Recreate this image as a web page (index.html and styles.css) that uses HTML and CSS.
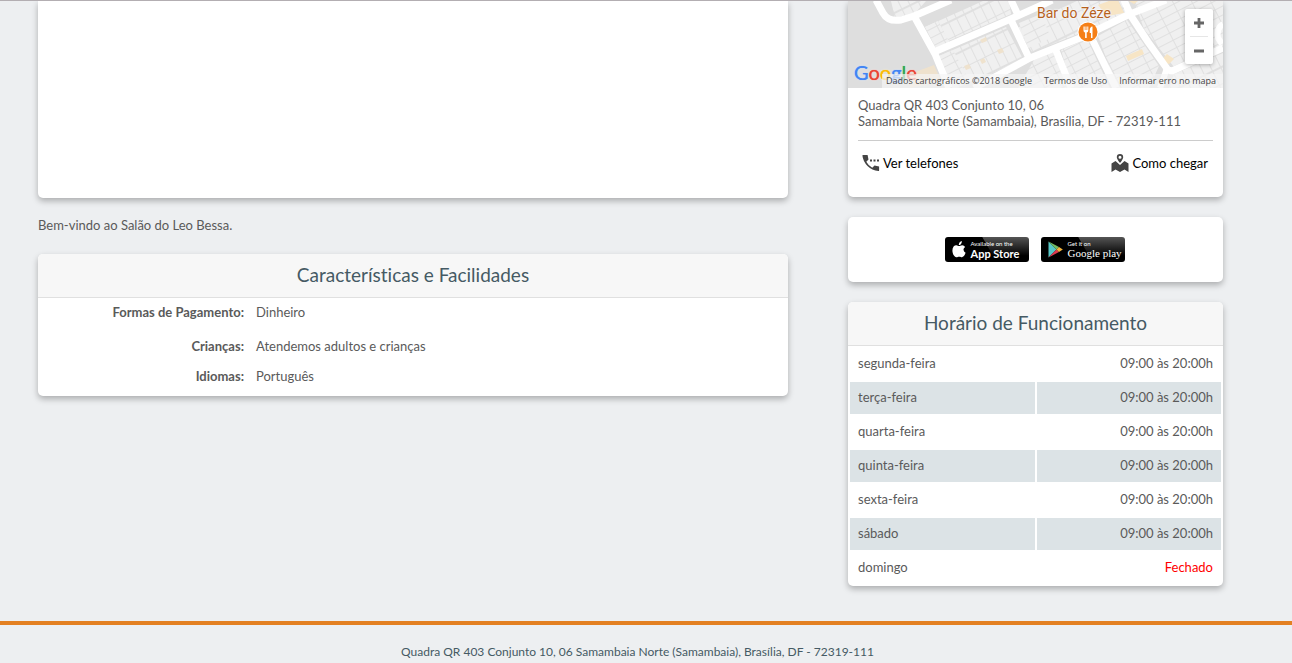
FILE: index.html
```html
<!DOCTYPE html>
<html lang="pt-BR">
<head>
<meta charset="utf-8">
<meta name="viewport" content="width=device-width, initial-scale=1">
<title>Salão do Leo Bessa</title>
<link rel="stylesheet" href="styles.css">
</head>
<body>
<main class="page">
  <div class="main-column">
    <section class="card gallery" aria-label="Galeria"></section>
    <p class="welcome">Bem-vindo ao Salão do Leo Bessa.</p>
    <section class="card">
      <h2 class="card-title">Características e Facilidades</h2>
      <dl class="features">
        <dt>Formas de Pagamento:</dt><dd>Dinheiro</dd>
        <dt class="spaced">Crianças:</dt><dd class="spaced">Atendemos adultos e crianças</dd>
        <dt>Idiomas:</dt><dd>Português</dd>
      </dl>
    </section>
  </div>

  <aside class="side-column">
    <section class="card location">
      <div class="map">
        <svg class="map-canvas" viewBox="0 1 375 87" preserveAspectRatio="xMidYMid slice" aria-hidden="true">
          <defs>
            <pattern id="lots" width="9" height="32" patternUnits="userSpaceOnUse" patternTransform="rotate(-26)">
              <rect width="9" height="32" fill="#e0e0e0"/>
              <path d="M0 1h8v14H0zM0 16h8v15H0z" fill="#f0f0f0"/>
            </pattern>
            <pattern id="lots-side" width="17" height="8" patternUnits="userSpaceOnUse" patternTransform="rotate(-27)">
              <rect width="17" height="8" fill="#e0e0e0"/>
              <path d="M0 0h16v7H0z" fill="#f0f0f0"/>
            </pattern>
          </defs>
          <rect y="1" width="375" height="87" fill="#dedede"/>
          <path d="M43 1h35L67 13 47 18zM77 27 135 1h26l2 13L89 46zM91 56l67-29 17 32-54 25-15 8zM169 28l60-27h48l2 12-49 21-46 18z" fill="url(#lots)"/>
          <path d="M77 27l13-6 13 24-14 5zM91 56l14-6 15 28-18 9zM171 23l22-9 10 24-23 10zM186 60l20-8 13 36h-49z" fill="url(#lots-side)"/>
          <path d="M213 50l26-11 23 49h-38zM250 36l29-16 32 46-10 22h-32zM286 1h89v45l-49 21-30-38z" fill="url(#lots-side)"/>
          <path d="M326 74l49-21v35h-54z" fill="url(#lots)"/>
          <path d="M250 5l19-7 7 15-17 3zM278 56l16-7 2 5-16 7zM316 57l3-3 7 5-5 5-5-1zM281 1l5 3 4-3z" fill="#f7e5c5"/>
          <path d="M132 40l6-3 1 4-5 2zM149 50l5-2 2 4-5 2zM132 60l4-2 2 4-4 2zM116 66l5-2 2 4-5 2zM62 74l24-9 7 16-31 7z" fill="#efe2cd"/>
          <g fill="none" stroke="#fff" stroke-width="7" stroke-linejoin="round">
            <path d="M28 0 35 13Q40 22 53 20L66 16 103 0"/>
            <path d="M66 16 87 54 101 88"/>
            <path d="M86 52 165 18 196 4 204 0"/>
            <path d="M163 0 170 15M163 20 182 60"/>
            <path d="M126 88 182 58 232 38 282 14 318 0"/>
            <path d="M207 48 223 88M245 41 268 88"/>
            <path d="M276 0 283 16 300 42 320 70 324 71 375 48"/>
            <path d="M319 68 312 88M375 24Q368 28 370 38L374 44" stroke-width="6"/>
          </g>
        </svg>
        <span class="poi-label">Bar do Zéze</span>
        <svg class="poi-pin" viewBox="0 0 22 22" aria-hidden="true">
          <circle cx="11" cy="11" r="10.5" fill="#fff"/>
          <circle cx="11" cy="11" r="9.5" fill="#f57f17"/>
          <path d="M6.5 5.5v4q0 2 1.600 2V17h1.600v-5.500q1.600 0 1.600-2v-4h-1v3.500h-.8V5.500h-1V9h-.8V5.500zM15.500 5.500q-2.800.3-2.800 4v2.500h1.300v5h1.500z" fill="#fff"/>
        </svg>
        <div class="zoom-control">
          <button type="button" class="zoom-button" aria-label="Aumentar o zoom"><svg viewBox="0 0 12 12"><path d="M6 1v10M1 6h10" stroke="#666" stroke-width="2.800"/></svg></button>
          <button type="button" class="zoom-button" aria-label="Diminuir o zoom"><svg viewBox="0 0 12 12"><path d="M1 6h10" stroke="#666" stroke-width="2.800"/></svg></button>
        </div>
        <a href="#" class="map-logo"><span class="blue">G</span><span class="red">o</span><span class="yellow">o</span><span class="blue">g</span><span class="green">l</span><span class="red">e</span></a>
        <div class="map-credits">
          <span>Dados cartográficos ©2018 Google</span>
          <a href="#">Termos de Uso</a>
          <a href="#">Informar erro no mapa</a>
        </div>
      </div>
      <div class="location-body">
        <address class="address">Quadra QR 403 Conjunto 10, 06<br>Samambaia Norte (Samambaia), Brasília, DF - 72319-111</address>
        <div class="location-actions">
          <a href="#" class="action">
            <svg class="action-icon" viewBox="0 0 18 18" aria-hidden="true"><path d="M1 1h4.600l.9 4.500-2.200 2.200q2 3.900 6 6l2.200-2.200 4.600 1v4q0 .5-.6.500Q10 16.500 5.500 12T.400 1.600Q.400 1 1 1zM8 5.500h2v2H8zM11.500 5.500h2v2h-2zM15 5.500h2v2h-2z" fill="#444"/></svg>
            Ver telefones</a>
          <a href="#" class="action">
            <svg class="action-icon" viewBox="0 0 18 18" aria-hidden="true"><path fill-rule="evenodd" d="M9 0a3.200 3.200 0 0 1 3.200 3.200Q12.200 5 9 9 5.800 5 5.800 3.200A3.200 3.200 0 0 1 9 0zm0 1.800a1.500 1.500 0 1 0 0 3 1.500 1.500 0 0 0 0-3z" fill="#444"/><path d="M.5 9.500 4.500 7 9 11 13.500 7l4 2.500V18l-4-2.500L9 18l-4.500-2.500-4 2.500z" fill="#444"/></svg>
            Como chegar</a>
        </div>
      </div>
    </section>

    <section class="card stores">
      <a href="#" class="store">
        <svg class="apple-icon" viewBox="0 0 14 17" aria-hidden="true"><path d="M9.800 0Q10 2 8.800 3.200 7.900 4.200 6.800 4.100 6.700 2.500 7.700 1.300 8.600.2 9.800 0zM7 5.100c.8 0 1.700-.8 3.200-.8q1.900.1 2.900 1.600-1.700 1.100-1.600 2.900.1 2.200 2.100 3-1.500 4.500-3.600 4.500c-.9 0-1.600-.6-2.800-.6s-1.900.6-2.700.6C2.400 16.300.4 12.900.4 9.500.4 6.200 2.300 4.300 4.300 4.300c1.200 0 2 .8 2.700.8z" fill="#fff"/></svg>
        <span class="store-text"><small>Available on the</small><b class="apple-name">App Store</b></span>
      </a>
      <a href="#" class="store">
        <svg class="play-icon" viewBox="0 0 15 17" aria-hidden="true"><path d="M.5.500v16L8.500 8.500z" fill="#57c8c8"/><path d="M.5.500 11 6 8.500 8.500z" fill="#75bd62"/><path d="M.5 16.500 8.500 8.500 11 11z" fill="#e0394f"/><path d="M11 6l3.800 2.500L11 11 8.500 8.500z" fill="#f3b33d"/></svg>
        <span class="store-text"><small>Get it on</small><b class="play-name">Google play</b></span>
      </a>
    </section>

    <section class="card">
      <h2 class="card-title">Horário de Funcionamento</h2>
      <table class="hours">
        <tbody>
          <tr><th scope="row">segunda-feira</th><td>09:00 às 20:00h</td></tr>
          <tr><th scope="row">terça-feira</th><td>09:00 às 20:00h</td></tr>
          <tr><th scope="row">quarta-feira</th><td>09:00 às 20:00h</td></tr>
          <tr><th scope="row">quinta-feira</th><td>09:00 às 20:00h</td></tr>
          <tr><th scope="row">sexta-feira</th><td>09:00 às 20:00h</td></tr>
          <tr><th scope="row">sábado</th><td>09:00 às 20:00h</td></tr>
          <tr><th scope="row">domingo</th><td class="closed">Fechado</td></tr>
        </tbody>
      </table>
    </section>
  </aside>
</main>
<footer class="footer">Quadra QR 403 Conjunto 10, 06 Samambaia Norte (Samambaia), Brasília, DF - 72319-111</footer>
</body>
</html>
```
FILE: styles.css
```css
* { box-sizing: border-box; }

body {
  margin: 0;
  border-top: 1px solid #b3aeb2;
  background: #edeff1;
  color: #5a5a5a;
  font: 13px/16px Lato, "Open Sans", sans-serif;
  font-variant-ligatures: none;
}

a { color: inherit; text-decoration: none; }

.page {
  display: grid;
  grid-template-columns: 2fr 1fr;
  gap: 60px;
  padding: 0 69px 35px 38px;
}

.side-column { display: flex; flex-direction: column; gap: 20px; }

.card {
  background: #fff;
  border-radius: 5px;
  box-shadow: 0 3px 6px rgba(0, 0, 0, .28);
  overflow: hidden;
}

.gallery { height: 197px; border-radius: 0 0 5px 5px; }
.welcome { margin: 19px 0 21px; }

.card-title {
  margin: 0;
  padding: 9px 10px 10px;
  border-bottom: 1px solid #e0e0e0;
  background: #f7f7f7;
  color: #455a64;
  font-size: 19px;
  font-weight: 400;
  line-height: 24px;
  text-align: center;
}

.features {
  display: grid;
  grid-template-columns: 206px 1fr;
  column-gap: 12px;
  row-gap: 14px;
  margin: 0;
  padding: 6px 0 12px;
}
.features dt { font-weight: 700; text-align: right; }
.features dd { margin: 0; }
.features .spaced { padding-top: 4px; }

.location { border-radius: 0 0 5px 5px; }
.map { position: relative; height: 87px; overflow: hidden; }
.map-canvas { display: block; width: 100%; height: 100%; }

.poi-label {
  position: absolute;
  top: 4px;
  left: 189px;
  color: #b5601c;
  font: 14px/16px Roboto, sans-serif;
  text-shadow: 0 0 2px #fff, 0 0 2px #fff;
}
.poi-pin { position: absolute; top: 20px; left: 229px; width: 22px; height: 22px; }

.zoom-control {
  position: absolute;
  top: 8px;
  right: 10px;
  width: 28px;
  padding: 0 5px;
  border-radius: 2px;
  background: #fff;
  box-shadow: 0 1px 4px rgba(0, 0, 0, .3);
}
.zoom-button {
  display: grid;
  place-items: center;
  width: 100%;
  height: 27px;
  padding: 0;
  border: 0;
  background: none;
}
.zoom-button + .zoom-button { height: 28px; border-top: 1px solid #e6e6e6; }
.zoom-button svg { width: 12px; height: 12px; }

.map-logo {
  position: absolute;
  bottom: 4px;
  left: 6px;
  font: 20px/24px Lato, sans-serif;
  text-shadow: 0 0 1px currentColor, 0 0 2px #fff;
}
.blue { color: #4285f4; }
.red { color: #ea4335; }
.yellow { color: #fbbc05; }
.green { color: #34a853; }

.map-credits {
  position: absolute;
  right: 0;
  bottom: 0;
  display: flex;
  gap: 12px;
  padding: 0 7px 0 4px;
  background: rgba(245, 245, 245, .7);
  color: #444;
  font: 9px/14px "Open Sans", sans-serif;
  white-space: nowrap;
}

.location-body { padding: 9px 10px 25px; }
.address { font-style: normal; padding-bottom: 11px; border-bottom: 1px solid #ccc; }
.location-actions {
  display: flex;
  justify-content: space-between;
  padding: 13px 5px 0 4px;
  color: #000;
}
.action { display: flex; align-items: center; gap: 3px; }
.action-icon { width: 18px; height: 18px; }

.stores { display: flex; justify-content: center; gap: 12px; padding: 20px 22px 20px 20px; }
.store {
  display: flex;
  align-items: center;
  gap: 5px;
  width: 84px;
  height: 25px;
  padding-left: 7px;
  border-radius: 3px;
  background: linear-gradient(60deg, #000 52%, transparent 53%), linear-gradient(#555, #000 75%);
  color: #fff;
  white-space: nowrap;
}
.apple-icon { width: 14px; height: 17px; }
.play-icon { width: 15px; height: 17px; }
.store-text { display: flex; flex-direction: column; }
.store-text small { font-size: 6px; line-height: 7px; }
.store-text b { font-weight: 700; line-height: 13px; }
.apple-name { font-size: 11px; }
.store-text .play-name { font-family: "Liberation Serif", serif; font-size: 11px; font-weight: 400; }

.hours { width: 100%; border-spacing: 2px; table-layout: fixed; }
.hours th, .hours td { height: 32px; padding: 0 8px 2px; }
.hours th { font-weight: 400; text-align: left; }
.hours td { text-align: right; }
.hours tr:nth-child(even) > * { background: #dce3e6; }
.hours .closed { color: #f00; }

.footer {
  padding: 19px 17px 4px 0;
  border-top: 4px solid #e38022;
  background: #edeff1;
  font-size: 12px;
  text-align: center;
  color: #455a64;
}
```
